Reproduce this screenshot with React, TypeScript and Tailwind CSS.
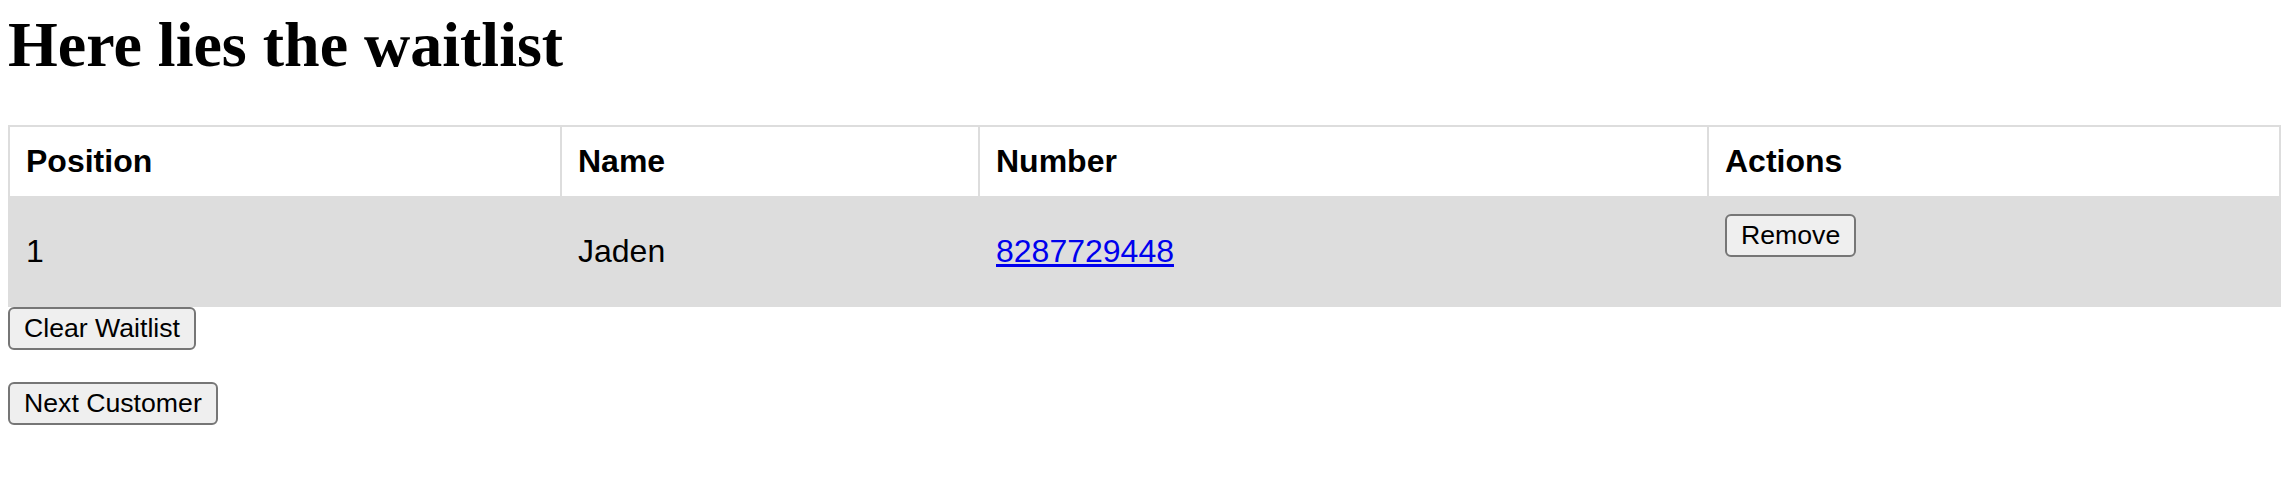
const waitlist = [{ position: 1, name: "Jaden", number: "8287729448" }];

const btn =
  "bg-[#efefef] border-2 border-[#767676] rounded-[6px] px-[14px] py-[4px] text-[26.67px] leading-[normal] text-black";

const App = () => {
  return (
    <div className="pl-[8px] pt-[8px] bg-white text-black leading-[normal] font-['Liberation_Sans',Arial,sans-serif]">
      <h1 className="mb-[43px] text-[64px] font-bold leading-[normal] font-['Liberation_Serif','Times_New_Roman',serif]">
        Here lies the waitlist
      </h1>
      <table className="w-[2271px] table-fixed border-collapse text-[32px]">
        <colgroup>
          <col className="w-[552px]" />
          <col className="w-[418px]" />
          <col className="w-[729px]" />
          <col className="w-[572px]" />
        </colgroup>
        <thead>
          <tr>
            <th className="border-2 border-[#dddddd] p-[16px] text-left font-bold">Position</th>
            <th className="border-2 border-[#dddddd] p-[16px] text-left font-bold">Name</th>
            <th className="border-2 border-[#dddddd] p-[16px] text-left font-bold">Number</th>
            <th className="border-2 border-[#dddddd] p-[16px] text-left font-bold">Actions</th>
          </tr>
        </thead>
        <tbody>
          {waitlist.map((item, index) => (
            <tr key={index} className="bg-[#dddddd]">
              <td className="border-2 border-[#dddddd] p-[16px] align-middle">{item.position}</td>
              <td className="border-2 border-[#dddddd] p-[16px] align-middle">{item.name}</td>
              <td className="border-2 border-[#dddddd] p-[16px] align-middle">
                <a href={`tel:${item.number}`} className="text-[#0000ee] underline">
                  {item.number}
                </a>
              </td>
              <td className="border-2 border-[#dddddd] p-[16px] align-middle">
                <form className="flex mb-[32px]" onSubmit={(e) => e.preventDefault()}>
                  <button type="submit" className={btn}>
                    Remove
                  </button>
                </form>
              </td>
            </tr>
          ))}
        </tbody>
      </table>
      <form className="flex mb-[32px]" onSubmit={(e) => e.preventDefault()}>
        <button type="submit" className={btn}>
          Clear Waitlist
        </button>
      </form>
      <form className="flex mb-[32px]" onSubmit={(e) => e.preventDefault()}>
        <button type="submit" className={btn}>
          Next Customer
        </button>
      </form>
    </div>
  );
};

export default App;
